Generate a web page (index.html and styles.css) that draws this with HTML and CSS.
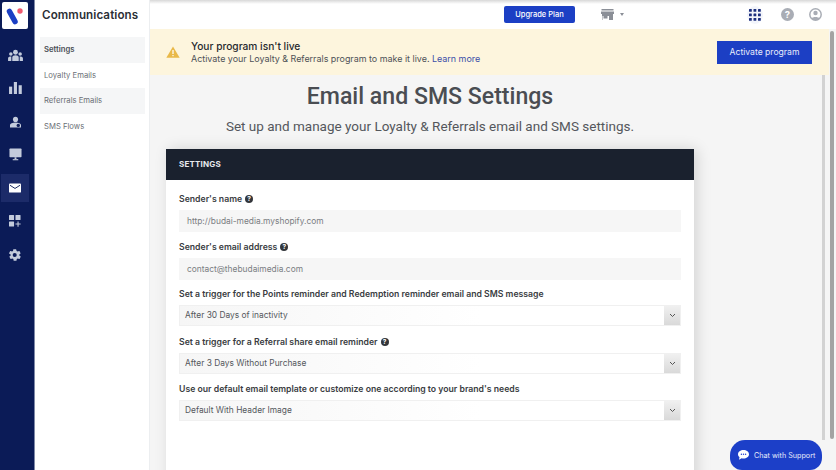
FILE: index.html
```html
<!DOCTYPE html>
<html lang="en">
<head>
<meta charset="utf-8">
<title>Email and SMS Settings</title>
<link rel="stylesheet" href="styles.css">
</head>
<body>
<div class="app">
  <nav class="rail">
    <div class="logo">
      <svg width="24" height="22" viewBox="0 0 24 22"><path d="M6.500 6.500 L12 16.500" fill="none" stroke="#1b3fc4" stroke-width="5.500" stroke-linecap="round"/><circle cx="17" cy="6" r="2.700" fill="#ef5a6f"/></svg>
    </div>
    <div class="rail-item">
      <svg width="15" height="13" viewBox="0 0 16 14" fill="#c3cbdc"><circle cx="8" cy="3.500" r="2.600"/><circle cx="3" cy="5.500" r="1.900"/><circle cx="13" cy="5.500" r="1.900"/><path d="M4.500 13V9.500C4.500 7.500 6 6.800 8 6.800S11.500 7.500 11.500 9.500V13Z"/><path d="M0 13V10C0 8.500 1.200 8 3.500 8V13ZM16 13V10C16 8.500 14.800 8 12.500 8V13Z"/></svg>
    </div>
    <div class="rail-item">
      <svg width="13" height="12" viewBox="0 0 14 13" fill="#c3cbdc"><rect x="0" y="5" width="3.400" height="8"/><rect x="5.200" y="0" width="3.400" height="13"/><rect x="10.400" y="3.500" width="3.400" height="9.500"/></svg>
    </div>
    <div class="rail-item">
      <svg width="11" height="12" viewBox="0 0 13 13" fill="#c3cbdc"><circle cx="6.500" cy="3.400" r="3"/><path d="M0 13V10C0 8 3 7 6.500 7S13 8 13 10V13Z"/><circle cx="9.800" cy="10.500" r="2" fill="#0b1b57"/></svg>
    </div>
    <div class="rail-item">
      <svg width="13" height="13" viewBox="0 0 14 14" fill="#c3cbdc"><rect x="0.500" y="0.500" width="13" height="9.500" rx="0.800"/><rect x="6" y="10" width="2" height="2"/><rect x="4" y="12" width="6" height="1.200"/></svg>
    </div>
    <div class="rail-item rail-active">
      <svg width="12" height="10" viewBox="0 0 13 10"><rect width="13" height="10" rx="1" fill="#fff"/><path d="M1 2 L6.500 5.500 L12 2" fill="none" stroke="#0b1b57" stroke-width="1"/></svg>
    </div>
    <div class="rail-item">
      <svg width="12" height="12" viewBox="0 0 13 13" fill="#c3cbdc"><rect x="0" y="0" width="5.500" height="5.500" rx="0.600"/><rect x="7" y="0" width="5.500" height="5.500" rx="0.600"/><rect x="0" y="7" width="5.500" height="5.500" rx="0.600"/><path d="M9.200 7H10.400V9.200H12.600V10.400H10.400V12.600H9.200V10.400H7V9.200H9.200Z"/></svg>
    </div>
    <div class="rail-item">
      <svg width="14" height="14" viewBox="0 0 24 24" fill="#c3cbdc"><path d="M19.400 13c.1-.3.100-.7.100-1s0-.7-.1-1l2.100-1.600c.2-.2.200-.4.100-.6l-2-3.500c-.1-.2-.4-.3-.6-.2l-2.500 1c-.5-.4-1.100-.7-1.700-1L14 2.400c0-.2-.2-.4-.5-.4h-4c-.3 0-.5.200-.5.400l-.4 2.700c-.6.300-1.200.6-1.700 1l-2.500-1c-.2-.1-.5 0-.6.200l-2 3.500c-.1.200-.1.400.1.600L4.600 11c0 .3-.1.700-.1 1s0 .7.100 1l-2.100 1.600c-.2.200-.2.400-.1.600l2 3.500c.1.200.4.300.6.200l2.500-1c.5.400 1.100.7 1.700 1l.4 2.700c0 .2.200.4.500.4h4c.3 0 .5-.2.500-.4l.4-2.700c.6-.3 1.200-.6 1.700-1l2.500 1c.2.100.5 0 .6-.2l2-3.500c.1-.2.100-.4-.1-.6ZM11.500 15.500a3.500 3.500 0 1 1 0-7 3.500 3.500 0 0 1 0 7Z"/></svg>
    </div>
  </nav>
  <aside class="subnav">
    <h2 class="subnav-title">Communications</h2>
    <ul class="subnav-list">
      <li class="subnav-item subnav-current">Settings</li>
      <li class="subnav-item">Loyalty Emails</li>
      <li class="subnav-item subnav-hover">Referrals Emails</li>
      <li class="subnav-item">SMS Flows</li>
    </ul>
  </aside>
  <div class="content">
    <header class="topbar">
      <button class="upgrade">Upgrade Plan</button>
      <div class="store">
        <svg width="13" height="11" viewBox="0 0 13 11" fill="#8b8f97"><rect x="0.500" y="0" width="12" height="1.500"/><path d="M0 2.500H13V5H0Z"/><path d="M1 5H12V11H8V7H1.500V11H1Z"/><rect x="2.500" y="7" width="4" height="2.500"/></svg>
        <span class="caret"></span>
      </div>
      <div class="apps">
        <svg width="12" height="12" viewBox="0 0 12 12" fill="#1c2f7e"><rect width="2.800" height="2.800" rx="0.500"/><rect x="4.500" width="2.800" height="2.800" rx="0.500"/><rect x="9" width="2.800" height="2.800" rx="0.500"/><rect y="4.500" width="2.800" height="2.800" rx="0.500"/><rect x="4.500" y="4.500" width="2.800" height="2.800" rx="0.500"/><rect x="9" y="4.500" width="2.800" height="2.800" rx="0.500"/><rect y="9" width="2.800" height="2.800" rx="0.500"/><rect x="4.500" y="9" width="2.800" height="2.800" rx="0.500"/><rect x="9" y="9" width="2.800" height="2.800" rx="0.500"/></svg>
      </div>
      <svg class="help" width="13" height="13" viewBox="0 0 13 13"><circle cx="6.500" cy="6.500" r="6.500" fill="#a9adb5"/><text x="6.500" y="10" text-anchor="middle" class="help-mark">?</text></svg>
      <svg class="user" width="13" height="13" viewBox="0 0 13 13"><circle cx="6.500" cy="6.500" r="5.700" fill="none" stroke="#a9adb5" stroke-width="1.500"/><circle cx="6.500" cy="5" r="2.200" fill="#a9adb5"/><path d="M2.500 10.500C3.500 8.500 9.500 8.500 10.500 10.500L8.500 12H4.500Z" fill="#a9adb5"/></svg>
    </header>
    <div class="page">
      <main class="main">
        <section class="banner">
          <svg class="warn" width="14" height="12" viewBox="0 0 14 12"><path d="M7 0.500 L13.700 11.800 H0.300 Z" fill="#e9b949"/><rect x="6.400" y="4" width="1.200" height="4" fill="#fff"/><rect x="6.400" y="9" width="1.200" height="1.200" fill="#fff"/></svg>
          <div class="banner-text">
            <div class="banner-title">Your program isn't live</div>
            <div class="banner-desc">Activate your Loyalty &amp; Referrals program to make it live. <a class="learn">Learn more</a></div>
          </div>
          <button class="activate">Activate program</button>
        </section>
        <div class="column">
          <h1 class="heading">Email and SMS Settings</h1>
          <p class="sub">Set up and manage your Loyalty &amp; Referrals email and SMS settings.</p>
          <section class="card">
            <div class="card-head">SETTINGS</div>
            <div class="card-body">
              <label class="label">Sender's name <span class="q">?</span></label>
              <div class="input">http://budai-media.myshopify.com</div>
              <label class="label">Sender's email address <span class="q">?</span></label>
              <div class="input">contact@thebudaimedia.com</div>
              <label class="label">Set a trigger for the Points reminder and Redemption reminder email and SMS message</label>
              <div class="select"><span class="select-value">After 30 Days of inactivity</span><span class="select-arrow"><svg width="7" height="5" viewBox="0 0 7 5"><path d="M1 1 L3.500 3.500 L6 1" fill="none" stroke="#555" stroke-width="1"/></svg></span></div>
              <label class="label">Set a trigger for a Referral share email reminder <span class="q">?</span></label>
              <div class="select"><span class="select-value">After 3 Days Without Purchase</span><span class="select-arrow"><svg width="7" height="5" viewBox="0 0 7 5"><path d="M1 1 L3.500 3.500 L6 1" fill="none" stroke="#555" stroke-width="1"/></svg></span></div>
              <label class="label">Use our default email template or customize one according to your brand's needs</label>
              <div class="select"><span class="select-value">Default With Header Image</span><span class="select-arrow"><svg width="7" height="5" viewBox="0 0 7 5"><path d="M1 1 L3.500 3.500 L6 1" fill="none" stroke="#555" stroke-width="1"/></svg></span></div>
            </div>
          </section>
        </div>
      </main>
      <div class="scrollbar"><div class="thumb"></div></div>
    </div>
    <div class="inner-track"></div>
    <div class="chat">
      <svg width="11" height="10" viewBox="0 0 11 10"><path d="M5.500 0C8.500 0 11 1.800 11 4.300S8.500 8.600 5.500 8.600C4.800 8.600 4.200 8.500 3.600 8.300L1 9.800 1.500 7.300C.6 6.500 0 5.500 0 4.300 0 1.800 2.500 0 5.500 0Z" fill="#fff"/><circle cx="3.400" cy="4.300" r="0.700" fill="#1f3fd0"/><circle cx="5.500" cy="4.300" r="0.700" fill="#1f3fd0"/><circle cx="7.600" cy="4.300" r="0.700" fill="#1f3fd0"/></svg>
      <span>Chat with Support</span>
    </div>
  </div>
</div>
</body>
</html>
```
FILE: styles.css
```css
* { box-sizing: border-box; }
html, body { margin: 0; height: 100%; overflow: hidden; }
body { font-family: "Inter", "Liberation Sans", sans-serif; color: #33373d; background: #f5f5f5; }
.app { display: flex; height: 470px; width: 836px; }

.rail { width: 34px; flex: none; background: #0b1b57; display: flex; flex-direction: column; align-items: stretch; }
.logo { width: 26px; height: 27px; margin: 2px 0 12px 2px; background: #fff; border-radius: 2px; display: flex; align-items: center; justify-content: center; }
.rail-item { height: 28px; margin: 0 5px 5.300px 1px; display: flex; align-items: center; justify-content: center; }
.rail-active { background: #1c2b69; }

.subnav { width: 115px; flex: none; background: #fff; border-left: 1px solid #7f89a8; padding: 0 4px 0 5px; }
.subnav-title { margin: 0; padding: 8px 0 0 2px; height: 37px; font: 600 11.600px/14px "Inter", sans-serif; color: #2b2f36; white-space: nowrap; letter-spacing: 0.100px; }
.subnav-list { list-style: none; margin: 0; padding: 0; }
.subnav-item { height: 25.500px; padding-left: 4px; font-size: 7.700px; line-height: 25.500px; color: #6b6f76; white-space: nowrap; }
.subnav-current { background: #f5f6f7; color: #4a4e55; font-weight: 600; }
.subnav-hover { background: #f5f6f7; }

.content { flex: 1; min-width: 0; position: relative; display: flex; flex-direction: column; border-left: 1px solid #eceef0; }
.topbar { height: 29px; flex: none; background: linear-gradient(#d8d8d8, #fff 4px); display: flex; align-items: center; }
.upgrade { margin-left: 354px; width: 71px; height: 17px; padding: 0; border: 0; border-radius: 2px; background: #1c3fc4; color: #fff; font: 500 7.500px "Inter", sans-serif; }
.store { margin-left: 26px; width: 30px; display: flex; align-items: center; gap: 6px; }
.caret { width: 0; height: 0; border-left: 2.500px solid transparent; border-right: 2.500px solid transparent; border-top: 3px solid #8b8f97; }
.apps { margin-left: 116px; width: 16px; height: 18px; display: flex; align-items: center; justify-content: center; background: #f3f5fb; border-radius: 50%; }
.help { margin-left: 18px; }
.help-mark { font: 700 9.500px "Inter", sans-serif; fill: #fff; }
.user { margin-left: 15px; }

.page { flex: 1; min-height: 0; display: flex; background: #f5f5f5; }
.main { width: 679px; flex: none; overflow: hidden; }
.banner { height: 46px; background: #fdf5dd; display: flex; align-items: center; padding: 0 17px 0 16px; }
.warn { flex: none; }
.banner-text { flex: 1; margin-left: 11px; }
.banner-title { font-size: 10.200px; line-height: 12px; font-weight: 500; color: #25282d; }
.banner-desc { font-size: 8.940px; line-height: 13px; margin-top: 0; color: #4d5157; white-space: nowrap; }
.learn { color: #3b4ea8; }
.activate { width: 95px; height: 23px; padding: 0; border: 0; background: #1c3fc4; color: #e9edfb; font: 400 8.600px "Inter", sans-serif; }
.column { width: 528px; margin-left: 16px; }
.heading { margin: 8px 0 0; text-align: center; font: 500 23.100px/28px "Roboto", sans-serif; color: #4a4d52; }
.sub { margin: 7px 0 0; text-align: center; font: 400 13.500px/16px "Roboto", sans-serif; color: #54575c; white-space: nowrap; }
.card { margin-top: 15px; background: #fff; box-shadow: 3px 0 14px rgba(0,0,0,.14); height: 400px; }
.card-head { height: 31px; background: #1a212e; color: #e8eaee; padding-left: 13px; font: 700 8px/31px "Inter", sans-serif; letter-spacing: 0.200px; }
.card-body { padding: 13px 13px 0; display: flex; flex-direction: column; }
.label { display: flex; align-items: center; gap: 3px; height: 12px; font: 600 8.700px/12px "Inter", sans-serif; color: #3a3d42; white-space: nowrap; }
.q { width: 8px; height: 8px; border-radius: 50%; background: #33363b; color: #fff; font-size: 6.500px; line-height: 8px; text-align: center; font-weight: 700; }
.input { height: 22px; margin: 5px 0 8.500px; padding-left: 8px; background: #f6f6f6; font-size: 8.400px; line-height: 22px; color: #7a7d82; }
.select { height: 21px; margin: 5px 0 9.500px; display: flex; background: linear-gradient(90deg, #f6f6f6, #fff 60%); border: 1px solid #f0f0f0; font-size: 8.400px; line-height: 19px; color: #55585d; }
.select-value { flex: 1; padding-left: 5px; }
.select-arrow { width: 16px; display: flex; align-items: center; justify-content: center; background: linear-gradient(#f0f0f0, #d9d9d9); }
.scrollbar { flex: 1; position: relative; background: #f5f5f5; }
.thumb { position: absolute; left: 1px; top: 2px; width: 3.500px; height: 408px; background: #a3a3a3; border-radius: 2px; }
.inner-track { position: absolute; left: 672px; top: 75px; width: 3px; height: 365px; background: #d2d2d2; }

.chat { position: absolute; left: 580px; top: 440px; width: 92px; height: 30px; border-radius: 15px 15px 12px 12px; background: #1c3fc8; color: #e8ecfb; display: flex; align-items: center; padding-left: 8px; gap: 5px; font: 400 7.200px "Inter", sans-serif; white-space: nowrap; }
```
